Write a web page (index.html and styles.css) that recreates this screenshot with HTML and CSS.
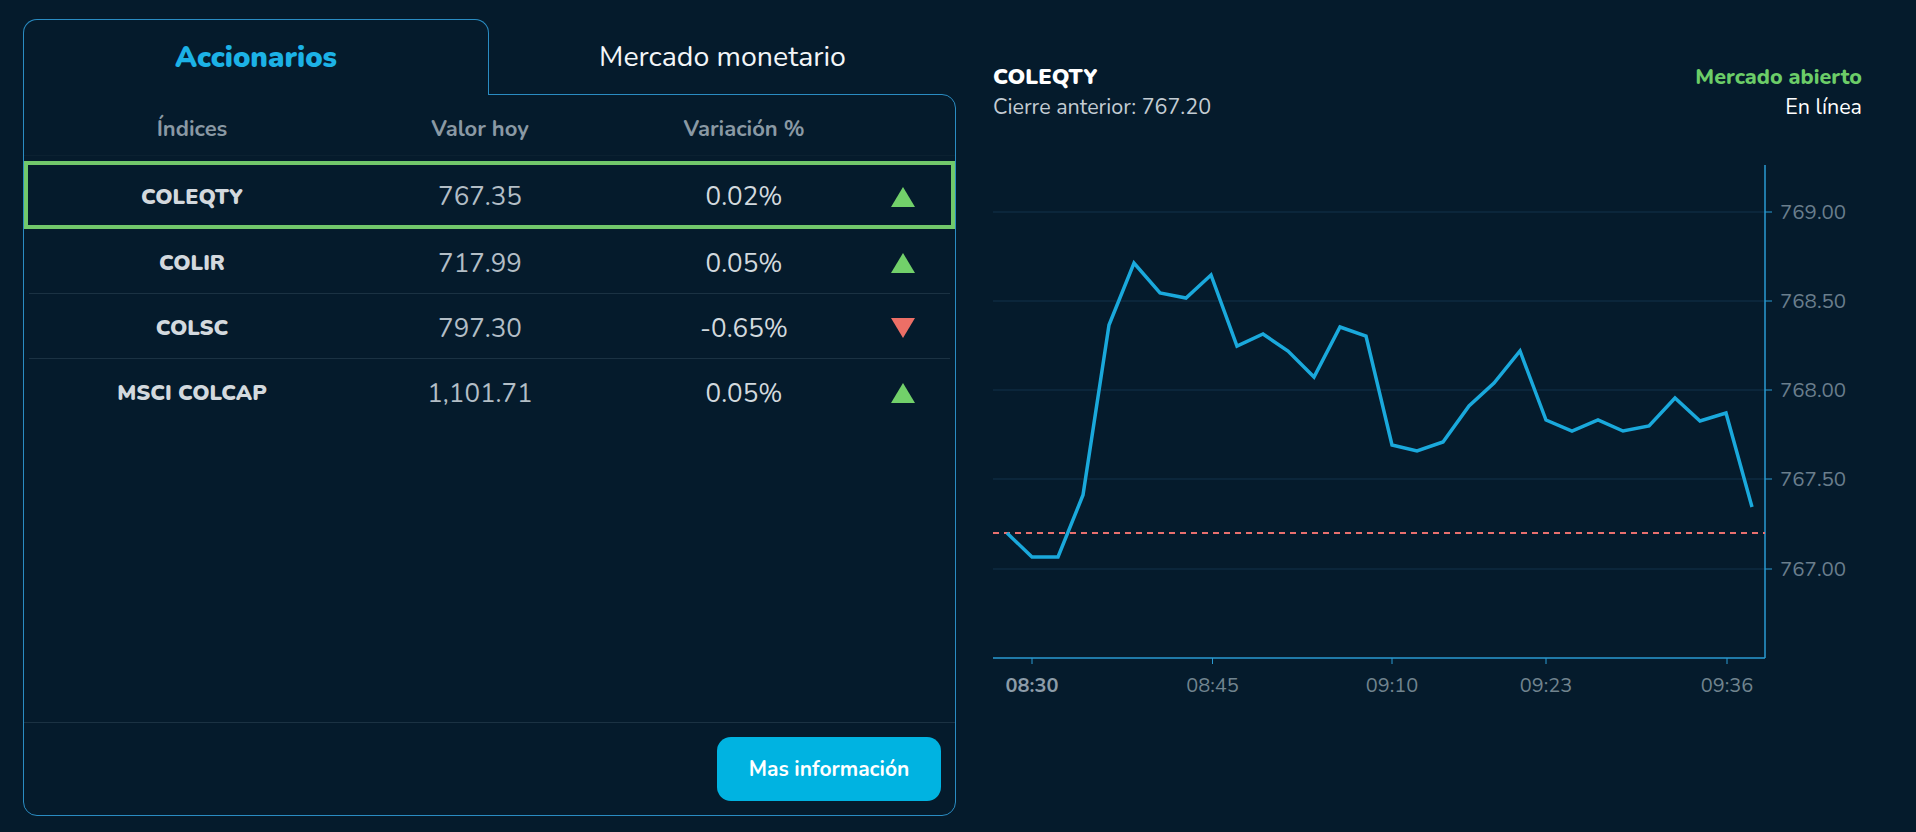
FILE: index.html
```html
<!DOCTYPE html>
<html lang="es">
<head>
<meta charset="utf-8">
<title>Índices</title>
<link rel="stylesheet" href="styles.css">
</head>
<body>
<div class="page">
  <section class="panel">
    <div class="tabs">
      <div class="tab active">Accionarios</div>
      <div class="tab">Mercado monetario</div>
    </div>
    <div class="card">
      <div class="thead grid">
        <span>Índices</span><span>Valor hoy</span><span>Variación %</span><span></span>
      </div>
      <div class="rows">
        <div class="row grid selected">
          <span class="name">COLEQTY</span><span class="val">767.35</span><span class="pct">0.02%</span>
          <span class="arrow"><svg width="24" height="20" viewBox="0 0 24 20"><polygon points="12,0 24,20 0,20" class="up"/></svg></span>
        </div>
        <div class="row grid line">
          <span class="name">COLIR</span><span class="val">717.99</span><span class="pct">0.05%</span>
          <span class="arrow"><svg width="24" height="20" viewBox="0 0 24 20"><polygon points="12,0 24,20 0,20" class="up"/></svg></span>
        </div>
        <div class="row grid line">
          <span class="name">COLSC</span><span class="val">797.30</span><span class="pct">-0.65%</span>
          <span class="arrow"><svg width="24" height="20" viewBox="0 0 24 20"><polygon points="0,0 24,0 12,20" class="down"/></svg></span>
        </div>
        <div class="row grid">
          <span class="name">MSCI COLCAP</span><span class="val">1,101.71</span><span class="pct">0.05%</span>
          <span class="arrow"><svg width="24" height="20" viewBox="0 0 24 20"><polygon points="12,0 24,20 0,20" class="up"/></svg></span>
        </div>
      </div>
      <div class="footer">
        <button class="btn">Mas información</button>
      </div>
    </div>
  </section>

  <section class="chart-panel">
    <div class="chart-head">
      <div>
        <div class="ch-title">COLEQTY</div>
        <div class="ch-sub">Cierre anterior: 767.20</div>
      </div>
      <div class="ch-right">
        <div class="ch-status">Mercado abierto</div>
        <div class="ch-online">En línea</div>
      </div>
    </div>
    <svg class="chart" width="869" height="590" viewBox="0 0 869 590">
      <g class="grid-lines">
        <line x1="0" y1="90" x2="772" y2="90"/>
        <line x1="0" y1="179" x2="772" y2="179"/>
        <line x1="0" y1="268" x2="772" y2="268"/>
        <line x1="0" y1="357" x2="772" y2="357"/>
        <line x1="0" y1="447" x2="772" y2="447"/>
      </g>
      <g class="ticks">
        <line x1="772" y1="90" x2="779" y2="90"/>
        <line x1="772" y1="179" x2="779" y2="179"/>
        <line x1="772" y1="268" x2="779" y2="268"/>
        <line x1="772" y1="357" x2="779" y2="357"/>
        <line x1="772" y1="447" x2="779" y2="447"/>
        <line x1="39" y1="536" x2="39" y2="542"/>
        <line x1="219.5" y1="536" x2="219.5" y2="542"/>
        <line x1="399" y1="536" x2="399" y2="542"/>
        <line x1="553" y1="536" x2="553" y2="542"/>
        <line x1="734" y1="536" x2="734" y2="542"/>
      </g>
      <line class="axis" x1="772" y1="43" x2="772" y2="536"/>
      <line class="axis" x1="0" y1="536" x2="772" y2="536"/>
      <g class="ylab">
        <text x="787" y="97">769.00</text>
        <text x="787" y="186">768.50</text>
        <text x="787" y="275">768.00</text>
        <text x="787" y="364">767.50</text>
        <text x="787" y="454">767.00</text>
      </g>
      <g class="xlab">
        <text x="39" y="570" class="first">08:30</text>
        <text x="219.5" y="570">08:45</text>
        <text x="399" y="570">09:10</text>
        <text x="553" y="570">09:23</text>
        <text x="734" y="570">09:36</text>
      </g>
      <line class="close" x1="0" y1="411" x2="772" y2="411"/>
      <polyline class="series" points="14,411 39,435 65,435 90,373 116,203 141,141 167,171 193,176 218,153 244,224 270,212 295,229 321,255 347,205 373,214 399,323 424,329 450,320 476,284 501,261 527,229 553,298 579,309 605,298 630,309 656,304 682,276 707,299 733,291 759,385"/>
    </svg>
  </section>
</div>
</body>
</html>
```

FILE: styles.css
```css
* { box-sizing: border-box; }
html, body {
  margin: 0;
  padding: 0;
  background: #051b2c;
}
body {
  font-family: "Nunito", "Lato", "Open Sans", sans-serif;
  color: #d5dbe0;
  width: 1916px;
  height: 832px;
  overflow: hidden;
}
.page {
  display: flex;
  align-items: flex-start;
  padding: 19px 0 0 23px;
}
.panel {
  width: 933px;
  display: flex;
  flex-direction: column;
}
.tabs {
  display: flex;
  height: 75px;
}
.tab {
  display: flex;
  align-items: center;
  justify-content: center;
  font-size: 28.5px;
  color: #f3f6f8;
  flex: 1;
  height: 75px;
}
.tab.active {
  flex: 0 0 466px;
  height: 76px;
  margin-bottom: -1px;
  border: 1px solid #2a8cc2;
  border-bottom: none;
  border-radius: 14px 14px 0 0;
  background: #051b2c;
  position: relative;
  z-index: 1;
  color: #1cb2e6;
  font-weight: 900;
  font-size: 29px;
  padding-bottom: 1px;
}
.card {
  height: 722px;
  border: 1px solid #2a8cc2;
  border-radius: 0 14px 14px 14px;
  display: flex;
  flex-direction: column;
}
.grid {
  display: grid;
  grid-template-columns: 336px 240px 288px 30px 1fr;
  align-items: center;
  text-align: center;
}
.thead {
  height: 61px;
  border-bottom: 1px solid #0b2131;
  font-size: 22px;
  font-weight: 700;
  color: #8a99a4;
  padding-top: 8px;
}
.rows {
  flex: 1;
  padding-top: 5px;
}
.row {
  height: 65px;
  padding-top: 3px;
}
.row.selected {
  height: 68px;
  box-shadow: inset 0 0 0 4px #72c86b;
}
.row.line {
  background: linear-gradient(#1b3243, #1b3243) no-repeat center bottom / calc(100% - 10px) 1px;
}
.name {
  font-size: 21.5px;
  font-weight: 900;
  color: #d3d9de;
}
.val {
  font-size: 26px;
  color: #b3bec6;
}
.pct {
  font-size: 26px;
  color: #d2d9de;
}
.arrow {
  display: flex;
  justify-content: center;
}
.arrow svg { display: block; }
.up { fill: #72d06a; }
.down { fill: #ec6f66; }
.footer {
  border-top: 1px solid #1b3243;
  padding: 14px 14px 14px;
  display: flex;
  justify-content: flex-end;
}
.btn {
  width: 224px;
  height: 64px;
  border: none;
  border-radius: 14px;
  background: #00b3e1;
  color: #ffffff;
  font-family: "Nunito", "Lato", sans-serif;
  font-size: 21px;
  font-weight: 700;
  padding: 0;
}
.chart-panel {
  margin-left: 37px;
  width: 869px;
  margin-top: 43px;
}
.chart-head {
  display: flex;
  justify-content: space-between;
}
.ch-title {
  font-size: 22px;
  line-height: 30px;
  font-weight: 900;
  color: #ffffff;
}
.ch-sub {
  font-size: 21.5px;
  line-height: 30px;
  color: #c3ccd3;
}
.ch-right { text-align: right; }
.ch-status {
  font-size: 21.5px;
  line-height: 30px;
  font-weight: 800;
  color: #6ccd68;
}
.ch-online {
  font-size: 21.5px;
  line-height: 30px;
  color: #ffffff;
}
.chart { display: block; }
.grid-lines line { stroke: #13324a; stroke-width: 1; }
.ticks line { stroke: #2a9bd2; stroke-width: 1; }
.axis { stroke: #2a9bd2; stroke-width: 1.5; }
.ylab text {
  font-family: "Nunito", "Lato", sans-serif;
  font-size: 20.5px;
  fill: #6a7e8c;
}
.xlab text {
  font-family: "Nunito", "Lato", sans-serif;
  font-size: 20px;
  fill: #71848f;
  text-anchor: middle;
}
.xlab .first { font-weight: 700; fill: #8c9ca8; }
.close { stroke: #e8706e; stroke-width: 2; stroke-dasharray: 6 5; }
.series { fill: none; stroke: #1aa9dc; stroke-width: 3.5; stroke-linejoin: miter; }
```
